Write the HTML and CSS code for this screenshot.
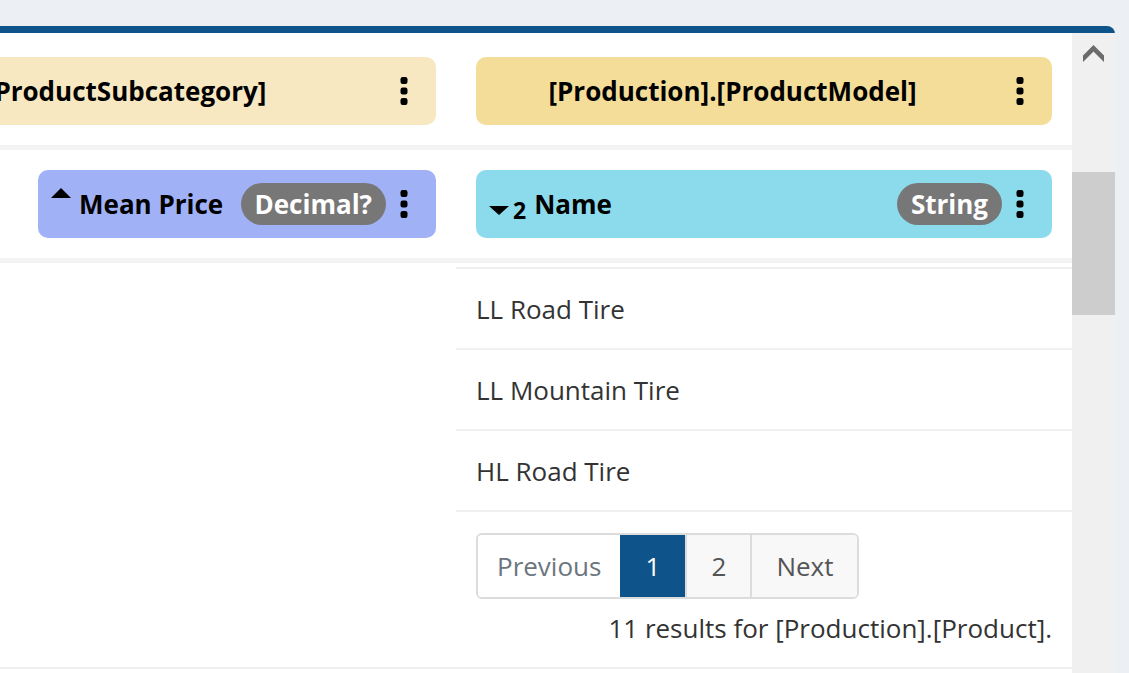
FILE: index.html
```html
<!DOCTYPE html>
<html lang="en">
<head>
<meta charset="utf-8">
<title>Grid</title>
<link rel="stylesheet" href="styles.css">
</head>
<body>
<div class="panel">
  <div class="content">
    <div class="row row-group">
      <div class="cell left">
        <div class="card group g1">
          <div class="title">[Production].[ProductSubcategory]</div>
          <svg class="kebab" width="8" height="28" viewBox="0 0 8 28"><rect x="0.5" y="0" width="7" height="7" rx="2.2"/><rect x="0.5" y="10.5" width="7" height="7" rx="2.2"/><rect x="0.5" y="21" width="7" height="7" rx="2.2"/></svg>
        </div>
      </div>
      <div class="cell right">
        <div class="card group g2">
          <div class="title">[Production].[ProductModel]</div>
          <svg class="kebab" width="8" height="28" viewBox="0 0 8 28"><rect x="0.5" y="0" width="7" height="7" rx="2.2"/><rect x="0.5" y="10.5" width="7" height="7" rx="2.2"/><rect x="0.5" y="21" width="7" height="7" rx="2.2"/></svg>
        </div>
      </div>
    </div>
    <div class="row row-cols">
      <div class="cell left">
        <div class="card col mean">
          <svg class="sort-up" width="20" height="10" viewBox="0 0 20 10"><polygon points="0,10 10,0 20,10"/></svg>
          <span class="title">Mean Price</span>
          <span class="pill">Decimal?</span>
          <svg class="kebab" width="8" height="28" viewBox="0 0 8 28"><rect x="0.5" y="0" width="7" height="7" rx="2.2"/><rect x="0.5" y="10.5" width="7" height="7" rx="2.2"/><rect x="0.5" y="21" width="7" height="7" rx="2.2"/></svg>
        </div>
      </div>
      <div class="cell right">
        <div class="card col name">
          <span class="sort-down"><svg width="20" height="9" viewBox="0 0 20 9"><polygon points="0,0 20,0 10,9"/></svg><span class="order">2</span></span>
          <span class="title">Name</span>
          <span class="pill">String</span>
          <svg class="kebab" width="8" height="28" viewBox="0 0 8 28"><rect x="0.5" y="0" width="7" height="7" rx="2.2"/><rect x="0.5" y="10.5" width="7" height="7" rx="2.2"/><rect x="0.5" y="21" width="7" height="7" rx="2.2"/></svg>
        </div>
      </div>
    </div>
    <div class="tbody">
      <div class="row data first">
        <div class="cell left"></div>
        <div class="cell right">LL Road Tire</div>
      </div>
      <div class="row data">
        <div class="cell left"></div>
        <div class="cell right">LL Mountain Tire</div>
      </div>
      <div class="row data">
        <div class="cell left"></div>
        <div class="cell right">HL Road Tire</div>
      </div>
      <div class="row pager-row">
        <div class="cell left"></div>
        <div class="cell right">
          <nav class="pager">
            <span class="page prev">Previous</span>
            <span class="page active">1</span>
            <span class="page">2</span>
            <span class="page next">Next</span>
          </nav>
          <div class="results">11 results for [Production].[Product].</div>
        </div>
      </div>
    </div>
  </div>
  <div class="scrollbar">
    <div class="sb-up">
      <svg width="21" height="17" viewBox="0 0 21 17"><polygon points="10.5,0 21,10.5 21,17 10.5,6.5 0,17 0,10.5"/></svg>
    </div>
    <div class="thumb"></div>
  </div>
</div>
</body>
</html>
```

FILE: styles.css
```css
* { box-sizing: border-box; }
html, body { margin: 0; padding: 0; }
body {
  background: #eceff4;
  font-family: "Open Sans", "Noto Sans", sans-serif;
  font-size: 26px;
  color: #333;
  height: 673px;
  overflow: hidden;
}
.panel {
  margin-top: 26px;
  width: 1115px;
  height: 647px;
  background: #fff;
  border-top: 7px solid #0e5389;
  border-top-right-radius: 8px;
  display: flex;
}
.content { width: 1072px; overflow: hidden; }
.row { display: grid; grid-template-columns: 456px 616px; }
.row-group { border-bottom: 5px solid #f3f3f3; }
.row-group .cell { padding: 24px 20px 20px 0; }
.row-group .cell.right { padding-left: 20px; }
.row-cols { border-bottom: 5px solid #f3f3f3; }
.row-cols .cell { padding: 20px; }
.row-cols .cell.left { padding-left: 38px; }

.card {
  display: flex;
  align-items: center;
  height: 68px;
  border-radius: 10px;
  font-weight: 700;
  color: #000;
  white-space: nowrap;
}
.kebab { display: block; fill: #000; flex: none; }
.group { padding: 0 28px 0 16px; }
.group .title { flex: 1; text-align: center; }
.group .kebab { margin-left: 43px; }
.g1 { background: #f7e8c1; margin-left: -289px; }
.g2 { background: #f3dd99; }

.col { padding: 0 28px 0 13px; }
.mean { background: #a0b2f5; }
.name { background: #8cdbec; }
.sort-up { display: block; margin-bottom: 22px; fill: #000; }
.sort-down { display: flex; align-items: center; margin-top: 13px; }
.sort-down svg { display: block; fill: #000; margin-right: 4px; }
.order { font-size: 23px; line-height: 1; }
.col .title { margin-left: 8px; }
.pill {
  margin-left: auto;
  height: 42px;
  border-radius: 21px;
  background: #777;
  color: #fff;
  padding: 0 14px;
  display: flex;
  align-items: center;
}
.col .kebab { margin-left: 14px; }

.tbody { padding-top: 4px; }
.data .cell.right {
  height: 81px;
  border-bottom: 2px solid #f0f0f0;
  padding-left: 20px;
  display: flex;
  align-items: center;
}
.data.first .cell.right { height: 83px; border-top: 2px solid #f0f0f0; }

.pager-row { border-bottom: 2px solid #f0f0f0; }
.pager-row .cell.right { padding: 21px 20px 22px; }
.pager {
  display: inline-flex;
  height: 66px;
  border: 2px solid #dcdcdc;
  border-radius: 6px;
  overflow: hidden;
}
.page {
  display: flex;
  align-items: center;
  justify-content: center;
  padding: 0 24px;
  min-width: 65px;
  background: #f8f8f8;
  color: #555;
  border-left: 2px solid #dcdcdc;
}
.page.prev { border-left: none; background: #fff; color: #6c757d; padding: 0 19px; }
.page.active { background: #0e5389; color: #fff; border-left: none; }
.results { margin-top: 12px; text-align: right; line-height: 34px; }

.scrollbar { width: 43px; background: #f0f0f0; flex: none; }
.sb-up { display: flex; justify-content: center; padding-top: 12px; }
.sb-up svg { display: block; fill: #6b6b6b; }
.thumb { margin-top: 110px; height: 143px; background: #cdcdcd; }
```
